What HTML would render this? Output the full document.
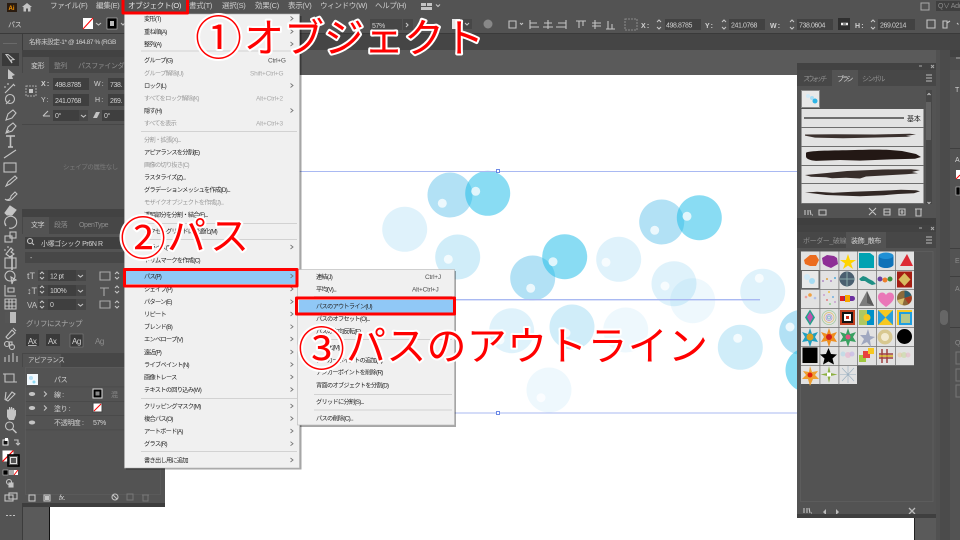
<!DOCTYPE html>
<html lang="ja"><head><meta charset="utf-8"><title>Illustrator</title>
<style>
html,body{margin:0;padding:0;width:960px;height:540px;overflow:hidden;background:#5a5a5a}
svg{display:block;position:absolute;left:0;top:0;filter:blur(.35px)}
text{font-family:"Liberation Sans","Noto Sans CJK JP",sans-serif}
.m{font-size:6.2px;fill:#262626;letter-spacing:-.7px}
.d{font-size:6.2px;fill:#9a9a9a;letter-spacing:-.7px}
.s{font-size:6.5px;fill:#555;letter-spacing:-.2px}
.sd{font-size:6.5px;fill:#aaa;letter-spacing:-.2px}
.b{font-size:7px;fill:#d2d2d2;letter-spacing:-.4px}
.g{font-size:7px;fill:#8d8d8d;letter-spacing:-.4px}
.o{font-family:"Noto Sans CJK JP",sans-serif;fill:#f00;stroke:#fff;stroke-width:4px;paint-order:stroke;stroke-linejoin:round}
.i{fill:none;stroke:#c4c4c4;stroke-width:1.1}
.f{fill:#c4c4c4}
</style></head><body>
<svg width="960" height="540" viewBox="0 0 960 540" xmlns="http://www.w3.org/2000/svg">
<!-- base -->
<rect width="960" height="540" fill="#5a5a5a"/>
<rect x="49" y="75" width="865" height="465" fill="#fff"/>
<rect x="49" y="75" width="1" height="465" fill="#111"/>
<rect x="914" y="75" width="1" height="465" fill="#222"/>
<rect y="33" width="960" height="17" fill="#454545"/>
<rect x="23" y="34" width="103" height="16" fill="#535353"/>
<text x="29" y="44" class="b" style="font-size:6.5px">名称未設定-1* @ 164.87 % (RGB</text>
<rect width="960" height="14" fill="#535353"/>
<rect y="14" width="960" height="19" fill="#535353"/>
<rect y="33" width="960" height="1" fill="#3a3a3a"/>

<!-- artwork -->
<g fill="#29abe2">
<g fill-opacity=".15"><circle cx="404.7" cy="229.3" r="22.5"/><circle cx="618.7" cy="259.3" r="22.5"/><circle cx="674" cy="283.7" r="22.5"/><circle cx="762.7" cy="291.3" r="22.5"/><circle cx="511.7" cy="330.7" r="22.5"/></g>
<g fill-opacity=".08"><circle cx="692.7" cy="300.7" r="22.5"/><circle cx="625.7" cy="330" r="22.5"/><circle cx="549" cy="390" r="22.5"/></g>
<g fill-opacity=".22"><circle cx="457.7" cy="257" r="22.5"/><circle cx="572" cy="327" r="22.5"/><circle cx="740.3" cy="347.3" r="22.5"/></g>
<g fill-opacity=".36"><circle cx="450" cy="195" r="22.5"/><circle cx="532.7" cy="278" r="22.5"/><circle cx="661.7" cy="222" r="22.5"/><circle cx="801.7" cy="332.3" r="22.5"/></g>
<g fill="#1cbbe8" fill-opacity=".52"><circle cx="487.7" cy="193.3" r="22.5"/><circle cx="564.7" cy="256.7" r="22.5"/><circle cx="699.3" cy="217.7" r="22.5"/><circle cx="808" cy="370" r="22.5"/></g>
</g>
<g fill="#fff" fill-opacity=".75">
<circle cx="442.3" cy="203.3" r="4.5"/><circle cx="475.7" cy="191.3" r="4.5"/><circle cx="448.3" cy="259.3" r="4.5"/><circle cx="530.7" cy="288.3" r="4.5"/><circle cx="553" cy="261.7" r="4.5"/><circle cx="606" cy="262.3" r="4.5"/><circle cx="654.7" cy="230.3" r="4.5"/><circle cx="687" cy="216.3" r="4.5"/><circle cx="665" cy="286" r="4.5"/><circle cx="759.3" cy="278.3" r="4.5"/><circle cx="737.7" cy="338.3" r="4.5"/><circle cx="541" cy="397.7" r="4.5"/><circle cx="566" cy="333" r="4.5"/><circle cx="500" cy="340" r="4.5"/><circle cx="790" cy="327" r="4.5"/>
</g>
<g fill="#a9b9f2">
<rect x="165" y="171" width="632" height="1"/><rect x="165" y="412.5" width="632" height="1"/><rect x="400" y="299" width="360" height="1.4"/>
</g>
<g fill="#fff" stroke="#4a6fe0" stroke-width=".8"><rect x="496.5" y="169.5" width="3" height="3"/><rect x="496.5" y="411.5" width="3" height="3"/></g>

<!-- left toolbar -->
<rect x="0" y="34" width="22" height="506" fill="#535353"/>
<rect x="22" y="34" width="1" height="506" fill="#3c3c3c"/>
<rect x="3" y="43" width="14" height="1" fill="#6a6a6a"/>
<rect x="2" y="53" width="17" height="13" fill="#3a3a3a"/>
<path class="i" d="M8 54.5l6 5-3 .5 1 3-6-8.500z"/>
<path class="f" d="M8 69l7 6-3 1 1 3h-5z"/>
<g class="i">
<path d="M5 93l9-9M13 84l2 2M8 83v2M4 87h2"/>
<circle cx="10" cy="99" r="4.500"/><path d="M6 104l4-4"/>
<path d="M6 120l2-6 5-4 3 3-4 5z"/>
<path d="M6 133l2-6 5-4 3 3-4 5zM6 133l3-3"/>
<path d="M6 136h9M10.500 136v11M8 147h5" stroke-width="1.600"/>
<path d="M4 158l12-8"/>
<rect x="4" y="163" width="12" height="9"/>
<path d="M6 186l2-4 7-6 2 2-7 6z"/>
<path d="M5 199c2 2 6 0 6-3l4-4 2 2-5 5c-2 2-5 2-7 0z"/>
<path d="M5 213l5-7 6 4-4 5H7z" fill="#c4c4c4"/>
<path d="M6 226a6 6 0 1 1 3 2M6 226l-1-3"/>
<rect x="5" y="236" width="7" height="6"/><rect x="10" y="232" width="6" height="6"/>
<path d="M6 254l5-6 2 2-2 2 3 2-4 3zM4 250h2M8 246v2"/>
<rect x="5" y="258" width="11" height="10"/><path d="M12 256v14" stroke-width="1.600"/>
<circle cx="10" cy="276" r="5"/><path d="M11 277l5 3-3 1-1 3z"/>
<path d="M5 285v11h11M8 292h6v-4H8z"/>
<path d="M5 299h11v10H5zM5 302h11M5 306h11M9 299v10M12 299v10"/>
</g>
<rect x="5" y="312" width="11" height="11" fill="#bbb"/><rect x="5" y="312" width="5" height="11" fill="#555"/>
<g class="i">
<path d="M6 337l6-7 3 3-7 6zM13 328l3 3"/>
<circle cx="7" cy="344" r="2.500"/><circle cx="12" cy="347" r="2.500"/><rect x="9" y="342" width="3" height="3"/>
<path d="M5 362v-5M9 362v-7M13 362v-9M17 362v-6"/>
<path d="M5 378v-8h9v8H5zM3 370h2M14 378h3" transform="translate(0,4)"/>
<path d="M6 391l-1 8M6 399l6-8 3 2-7 7z" transform="translate(0,1)"/>
</g>
<path class="f" d="M7 417v-7l1-1 1 1v-3h1l1 3v-3h1l1 3v-2h1l1 3v-1h1v5l-2 5H9z"/>
<g class="i"><circle cx="9.500" cy="426" r="4"/><path d="M12.500 429l4 4" stroke-width="1.500"/></g>
<rect x="3" y="440" width="5" height="5" fill="#111" stroke="#eee"/><rect x="5" y="438" width="3" height="3" fill="#fff"/>
<path class="i" d="M14 440h4v5M16 443l2 2 2-2"/>
<rect x="2.500" y="450.500" width="11" height="11" fill="#fff"/><path d="M2.500 461.500l11-11" stroke="#f00" stroke-width="1.200"/>
<rect x="8" y="455" width="11" height="11" fill="#555" stroke="#000" stroke-width="1.600"/>
<rect x="10.500" y="457.500" width="6" height="6" fill="#555" stroke="#ddd" stroke-width="1"/>
<rect x="3" y="470" width="5" height="5" fill="#000" stroke="#ddd" stroke-width=".5"/><rect x="9" y="470" width="5" height="5" fill="#aaa"/><rect x="14" y="470" width="4" height="5" fill="#fff"/><path d="M14 475l4-5" stroke="#f00"/>
<g class="i"><circle cx="9" cy="482" r="2.500"/><rect x="9" y="483" width="4" height="4" fill="#c4c4c4"/>
<rect x="5" y="495" width="8" height="6"/><rect x="9" y="493" width="8" height="6"/></g>
<g class="f"><rect x="6" y="515" width="2" height="1"/><rect x="9.500" y="515" width="2" height="1"/><rect x="13" y="515" width="2" height="1"/></g>

<!-- left panels -->
<rect x="22" y="50" width="143" height="457" fill="#535353"/>
<rect x="22" y="50" width="143" height="7" fill="#424242"/>
<rect x="22" y="57" width="143" height="16" fill="#474747"/>
<rect x="23" y="57" width="26" height="16" fill="#535353"/>
<text x="31" y="68" class="b">変形</text><text x="54" y="68" class="g">整列</text><text x="78" y="68" class="g">パスファインダー</text>
<g fill="#c4c4c4"><rect x="26" y="86" width="10" height="10" fill="none" stroke="#aaa" stroke-dasharray="2 1"/><rect x="29" y="89" width="4" height="4"/></g>
<text x="41" y="86" class="b" font-weight="bold">X :</text>
<rect x="53" y="78" width="36" height="12" fill="#3f3f3f"/><text x="55" y="87" class="b">498.8785</text>
<text x="94" y="86" class="b">W :</text><rect x="108" y="78" width="17" height="12" fill="#3f3f3f"/><text x="110" y="87" class="b">738.</text>
<text x="41" y="102" class="b">Y :</text>
<rect x="53" y="94" width="36" height="12" fill="#3f3f3f"/><text x="55" y="103" class="b">241.0768</text>
<text x="95" y="102" class="b">H :</text><rect x="108" y="94" width="17" height="12" fill="#3f3f3f"/><text x="110" y="103" class="b">269.</text>
<path class="i" d="M43 116l5-5M43 116h7"/>
<rect x="53" y="110" width="26" height="11" fill="#3f3f3f"/><text x="55" y="118" class="b">0°</text><rect x="79" y="110" width="9" height="11" fill="#474747"/><path class="i" d="M81 115l2.500 2 2.500-2"/>
<path class="f" d="M93 118l3-6h4l-3 6z"/><rect x="102" y="110" width="23" height="11" fill="#3f3f3f"/><text x="104" y="118" class="b">0°</text>
<rect x="22" y="124" width="103" height="1" fill="#474747"/>
<text x="63" y="169" class="g" style="font-size:6.500px;fill:#7a7a7a">シェイプの属性なし</text>

<rect x="22" y="209" width="143" height="8" fill="#424242"/>
<rect x="22" y="217" width="143" height="17" fill="#474747"/>
<rect x="23" y="217" width="26" height="17" fill="#535353"/>
<text x="31" y="227" class="b">文字</text><text x="54" y="227" class="g">段落</text><text x="79" y="227" class="g">OpenType</text>
<rect x="25" y="237" width="100" height="12" fill="#3f3f3f"/><text x="41" y="246" class="b">小塚ゴシック Pr6N R</text>
<g class="i"><circle cx="30" cy="241" r="2.500"/><path d="M32 243l2 2"/></g>
<rect x="25" y="252" width="100" height="11" fill="#474747"/><text x="30" y="260" class="b">-</text>
<g fill="#474747"><rect x="38" y="270" width="48" height="11"/><rect x="38" y="285" width="48" height="11"/><rect x="38" y="299" width="48" height="11"/></g>
<g fill="#3f3f3f"><rect x="48" y="270" width="28" height="11"/><rect x="48" y="285" width="28" height="11"/><rect x="48" y="299" width="28" height="11"/></g>
<text x="50" y="278.500" class="b">12 pt</text><text x="50" y="293" class="b">100%</text><text x="50" y="307" class="b">0</text>
<text x="27" y="279" fill="#c4c4c4" font-size="9">tT</text><text x="27" y="294" fill="#c4c4c4" font-size="9">↕T</text><text x="27" y="308" fill="#c4c4c4" font-size="8">VA</text>
<g class="i"><path d="M40 274l2-2 2 2M40 277l2 2 2-2M40 288l2-2 2 2M40 291l2 2 2-2M40 303l2-2 2 2M40 306l2 2 2-2M78 275l2.500 2 2.500-2M78 290l2.500 2 2.500-2M78 304l2.500 2 2.500-2"/>
<path d="M100 272h10v8h-10zM100 288h9M104 288v8M100 301h10v7h-10z" stroke="#aaa"/>
<path d="M115 274l2-2 2 2M115 277l2 2 2-2M115 288l2-2 2 2M115 291l2 2 2-2M115 303l2-2 2 2M115 306l2 2 2-2"/></g>
<text x="26" y="326" style="font-size:7.500px;fill:#a8a8a8;letter-spacing:-.5px">グリフにスナップ</text>
<g><rect x="26" y="334" width="13" height="12" fill="#3a3a3a"/><rect x="46" y="334" width="14" height="12" fill="#3a3a3a"/><rect x="70" y="334" width="13" height="13" fill="#3a3a3a" stroke="#888" stroke-width=".5"/>
<text x="28" y="344" class="b" style="font-size:8px;text-decoration:underline">Ax</text><text x="48" y="344" class="b" style="font-size:8px">Ax</text><text x="72" y="344" class="b" style="font-size:8px">Ag</text><text x="95" y="344" class="g" style="font-size:8px">Ag</text></g>

<rect x="22" y="353" width="143" height="14" fill="#474747"/>
<rect x="23" y="354" width="38" height="13" fill="#535353"/>
<text x="28" y="362" class="b" style="font-size:6.500px">アピアランス</text>
<rect x="27" y="374" width="11" height="11" fill="#f2f8fc"/><circle cx="31" cy="378" r="2" fill="#b5e0f5"/><circle cx="34" cy="382" r="1.500" fill="#8ad9f3"/>
<text x="54" y="382" class="b">パス</text>
<g fill="#484848"><rect x="25" y="386.500" width="100" height=".8"/><rect x="25" y="401" width="100" height=".8"/><rect x="25" y="415" width="100" height=".8"/><rect x="25" y="429.500" width="100" height=".8"/></g>
<g class="f"><ellipse cx="32" cy="394" rx="3.200" ry="2"/><ellipse cx="32" cy="408" rx="3.200" ry="2"/><ellipse cx="32" cy="422.500" rx="3.200" ry="2"/></g>
<path class="i" d="M44 391.500l2.500 2.500-2.500 2.500M44 405.500l2.500 2.500-2.500 2.500"/>
<text x="54" y="397" class="b">線 :</text><text x="54" y="411" class="b">塗り :</text><text x="54" y="425" class="b">不透明度 :</text><text x="93" y="425" class="b">57%</text>
<text x="111" y="397" class="g">混</text>
<rect x="93" y="389" width="9" height="9" fill="#000" stroke="#ddd"/><rect x="95.500" y="391.500" width="4" height="4" fill="#888"/>
<rect x="93" y="403" width="9" height="9" fill="#fff" stroke="#444"/><path d="M94 411l7-7" stroke="#f00"/>
<rect x="25.500" y="367.500" width="135" height="127" fill="none" stroke="#5e5e5e" stroke-width=".7"/>
<g class="i"><rect x="29" y="495" width="6" height="6"/><rect x="44" y="495" width="6" height="6"/><rect x="45.500" y="496.500" width="3" height="3" fill="#c4c4c4"/>
<circle cx="115" cy="497" r="3"/><path d="M113 495l4 4"/></g>
<text x="59" y="500" class="b" style="font-size:7px;font-style:italic">fx.</text>
<g fill="none" stroke="#777" stroke-width="1"><rect x="127" y="494" width="6" height="6"/><path d="M142 495h7M143 495v6h5v-6"/></g>
<rect x="22" y="503" width="143" height="4" fill="#3d3d3d"/>

<!-- control bar text -->
<text x="8" y="27" class="b">パス</text>
<rect x="83" y="18" width="10" height="11" fill="#fff"/><path d="M83 29l10-11" stroke="#f00" stroke-width="1"/>
<path class="i" d="M96 23l2.500 2 2.500-2"/>
<rect x="107" y="18" width="10" height="11" fill="#000" stroke="#ddd" stroke-width=".5"/><rect x="110" y="21" width="4" height="5" fill="#bbb"/>
<path class="i" d="M121 23l2 2 2-2"/>
<!-- menu bar -->
<rect x="7" y="3" width="10" height="9" fill="#2b1c10"/><text x="8.500" y="10" style="font-size:6px;fill:#ff9a00;font-weight:bold">Ai</text>
<path class="f" d="M22 7l5-4 5 4h-1.500v4.500H28V8.500h-2v3h-2.500V7z"/>
<g class="b" style="font-size:7.500px;fill:#cfcfcf;letter-spacing:-.3px">
<text x="50" y="8" style="font-size:7.500px">ファイル(F)</text><text x="96" y="8">編集(E)</text><text x="128" y="8" fill="#e6e6e6">オブジェクト(O)</text><text x="189" y="8">書式(T)</text><text x="222" y="8">選択(S)</text><text x="255" y="8">効果(C)</text><text x="288" y="8">表示(V)</text><text x="320" y="8">ウィンドウ(W)</text><text x="375" y="8">ヘルプ(H)</text></g>
<rect x="421" y="3" width="5" height="3" fill="#c4c4c4"/><rect x="427" y="3" width="5" height="3" fill="#c4c4c4"/><rect x="421" y="7" width="11" height="3" fill="#c4c4c4"/><path class="i" d="M436 4.500l2 2 2-2"/>
<rect x="921" y="3" width="8" height="7" fill="none" stroke="#aaa"/><rect x="936" y="1" width="24" height="10" fill="#3f3f3f"/><text x="938" y="8" class="g">Q∨ Ado</text>
<!-- control right -->
<rect x="370" y="19" width="32" height="11" fill="#474747"/><text x="372" y="28" class="b">57%</text>
<rect x="403" y="19" width="10" height="11" fill="#474747"/><path class="i" d="M406 23l2 2-2 2"/>
<circle cx="488" cy="24" r="4.500" fill="#888"/>
<rect x="452" y="19" width="20" height="10" fill="#474747"/><rect x="452" y="19" width="8" height="10" fill="#e8e8e8"/><path class="i" d="M465 23l2 2 2-2"/>
<g class="i" stroke="#bbb"><path d="M509 21v7h7v-7zM520 23l1.500 1.500 1.500-1.500"/>
<path d="M530 20v9M530 23h7M530 27h9M548 20v9M544 23h8M543 27h10M566 20v9M558 23h8M556 27h10M576 21h10M579 21v7M583 21v5M595 20v9M592 23h9M592 26h9M606 29h9M608 21v8M612 24v5"/>
<rect x="625" y="19" width="12" height="11" stroke="#888" stroke-dasharray="2 1"/></g>
<g class="b" style="font-weight:bold"><text x="641" y="28">X :</text><text x="705" y="28">Y :</text><text x="770" y="28">W :</text><text x="855" y="28">H :</text></g>
<g fill="#424242"><rect x="665" y="19" width="36" height="11"/><rect x="729" y="19" width="36" height="11"/><rect x="797" y="19" width="36" height="11"/><rect x="878" y="19" width="37" height="11"/></g>
<g class="b"><text x="666" y="27.500">498.8785</text><text x="731" y="27.500">241.0768</text><text x="799" y="27.500">738.0604</text><text x="880" y="27.500">269.0214</text></g>
<g class="i"><path d="M657 22l2-2 2 2M657 27l2 2 2-2M722 22l2-2 2 2M722 27l2 2 2-2M790 22l2-2 2 2M790 27l2 2 2-2M871 22l2-2 2 2M871 27l2 2 2-2"/>
<path d="M927 20h8v8h-8zM943 21h4v7h-4zM947 23l3-2M957 23l1.500 1.500"/></g>
<rect x="838" y="18" width="12" height="12" fill="#2f2f2f"/><path d="M841 24h7" stroke="#eee" stroke-width="2.500"/><path d="M843 24h3" stroke="#2f2f2f"/>

<!-- right dock -->
<rect x="936" y="50" width="14" height="490" fill="#515151"/>
<rect x="940" y="50" width="10" height="490" fill="#4b4b4b"/>
<rect x="950" y="50" width="10" height="490" fill="#4d4d4d"/>
<rect x="950" y="70" width="10" height="470" fill="#535353"/>
<rect x="940" y="310" width="8" height="15" rx="4" fill="#666"/>
<g fill="#3f3f3f"><rect x="950" y="148" width="10" height="1"/><rect x="950" y="248" width="10" height="1"/><rect x="950" y="276" width="10" height="1"/><rect x="950" y="327" width="10" height="1"/></g>
<text x="955" y="92" class="b">T</text><text x="955" y="162" class="b">A</text>
<rect x="956" y="170" width="4" height="9" fill="#fff"/><path d="M956 179l4-4" stroke="#f00"/>
<rect x="956" y="187" width="4" height="8" fill="#000" stroke="#ddd" stroke-width=".5"/>
<text x="955" y="263" class="g">E</text><text x="955" y="291" class="g">A</text><text x="955" y="345" class="g">Q</text>
<g fill="none" stroke="#777"><rect x="956" y="352" width="5" height="12"/><rect x="956" y="369" width="5" height="12"/><rect x="956" y="385" width="5" height="12"/></g>
<rect x="950" y="50" width="10" height="7" fill="#424242"/>
<path d="M956 58h4" stroke="#aaa"/>

<!-- brush panel -->
<rect x="797" y="63" width="139" height="159" fill="#535353"/>
<rect x="797" y="63" width="139" height="7" fill="#424242"/>
<path d="M919 66h3M931 65l3 3M934 65l-3 3" stroke="#aaa"/>
<rect x="797" y="70" width="139" height="16" fill="#474747"/>
<rect x="832" y="70" width="26" height="16" fill="#535353"/>
<text x="803" y="81" class="g" textLength="24">スウォッチ</text><text x="837" y="81" class="b" textLength="16">ブラシ</text><text x="862" y="81" class="g" textLength="23">シンボル</text>
<path d="M926 75h6M926 78h6M926 81h6" stroke="#bbb"/>
<rect x="801.500" y="90.500" width="18" height="17" fill="#e8e8e8" stroke="#888"/>
<circle cx="808" cy="96" r="2" fill="#cfe9f7"/><circle cx="812" cy="98" r="2" fill="#a8dcf3"/><circle cx="815" cy="101" r="2.500" fill="#2fb5e6"/>
<rect x="801.500" y="109" width="122" height="95" fill="#e3e3e3"/>
<g fill="#6e6e6e"><rect x="801" y="127" width="123" height="1"/><rect x="801" y="146" width="123" height="1"/><rect x="801" y="165" width="123" height="1"/><rect x="801" y="183" width="123" height="1"/><rect x="801" y="203" width="123" height="1"/></g>
<rect x="804" y="117" width="100" height="2" fill="#6e6e6e"/><text x="907" y="121" style="font-size:7px;fill:#222;letter-spacing:-.3px">基本</text>
<g fill="#231815">
<path d="M805 134.500l30-.3 40 .3 35-.8 6 .8-10 1.400 5 .8-28 .7-40 .8-28-.6-10-2z" fill-opacity=".88"/>
<path d="M806 153c0-2 20-2.500 40-2.700 20-.5 30-1 44-.3l12 1 14 3 5 3-6 1.800-25 .6-30 1.200-20-.6-24 .9c-6-.4-10-2-10-4.500z"/>
<path d="M805 175l22-2 20-2 36-1.500 28-.3 9 .8-8 2 6 1.200-12 1-18 1-22 1.300-6 2-14-.8-14 .5-6-1-15-.5z" fill-opacity=".9"/>
<path d="M805 192.500l12-.7 16 1 20-1 28-1 20-1 15 .5 4 1-6 2-16 .7-14 1.200-24 1-14-.5-20-.7-12-1.500z" fill-opacity=".92"/>
</g>
<rect x="926" y="90" width="6" height="114" fill="#474747"/><rect x="926" y="102" width="5" height="38" fill="#626262"/>
<g class="i"><path d="M927.500 95l1.500-1.500 1.500 1.500M927.500 202l1.500 1.500 1.500-1.500"/>
<path d="M805 215v-5M808 215v-5M811 215l-1-5M812 215h1M819 210h7v5h-7z"/>
<path d="M869 208l7 7M876 208l-7 7M884 209h6v6h-6zM884 212h6M899 209h6v6h-6zM902 210v4M900.500 212h3M916 209h5v7h-5zM915 209h7"/></g>
<rect x="797" y="218" width="139" height="7" fill="#3f3f3f"/>

<!-- symbols panel -->
<rect x="797" y="225" width="139" height="290" fill="#535353"/>
<rect x="797" y="225" width="139" height="7" fill="#424242"/>
<path d="M919 228h3M931 227l3 3M934 227l-3 3" stroke="#aaa"/>
<rect x="797" y="232" width="139" height="16" fill="#474747"/>
<rect x="846" y="232" width="40" height="16" fill="#535353"/>
<text x="803" y="243" class="g">ボーダー_破線</text><text x="851" y="243" class="b">装飾_散布</text>
<path d="M926 237h6M926 240h6M926 243h6" stroke="#bbb"/>
<rect x="800.500" y="251.500" width="132.500" height="250" fill="none" stroke="#616161" stroke-width=".7"/>
<rect x="801" y="251.500" width="113" height="114" fill="#e2e2e2"/>
<rect x="801" y="365" width="56" height="19" fill="#e2e2e2"/>
<g fill="#7a7a7a"><rect x="819.500" y="251.500" width=".8" height="133"/><rect x="838.500" y="251.500" width=".8" height="133"/><rect x="857" y="251.500" width=".8" height="114"/><rect x="876" y="251.500" width=".8" height="114"/><rect x="895" y="251.500" width=".8" height="114"/><rect x="801" y="270" width="113" height=".8"/><rect x="801" y="289" width="113" height=".8"/><rect x="801" y="308" width="113" height=".8"/><rect x="801" y="327" width="113" height=".8"/><rect x="801" y="346" width="113" height=".8"/><rect x="801" y="365" width="113" height=".8"/></g>
<!-- row1 -->
<path d="M804 260l6-5h6l3 5-3 6h-6l-5-2z" fill="#ec6c1f"/>
<path d="M822 258l5-3 7 1 3 2 1 6-7 4-5-2-3-2z" fill="#8e2f96"/>
<path d="M848 254l2 6h6l-5 3.500 2 5.500-5-3.500-5 3.500 2-5.500-5-3.500h6z" fill="#ffd400"/>
<path d="M859 253h11l4 3v12h-15z" fill="#00a2b2"/>
<ellipse cx="886" cy="256" rx="7.500" ry="3.500" fill="#1f8fd4"/><path d="M878.500 256v9c2 4 13 4 15 0v-9c-2 4-13 4-15 0z" fill="#0f72b8"/>
<path d="M907 254l6 12h-13z" fill="#dd2a35"/>
<!-- row2 -->
<rect x="801.500" y="270.500" width="17.500" height="18" fill="#e9e9e9" stroke="#666"/>
<circle cx="807" cy="277" r="3" fill="#cfe9f7"/><circle cx="812" cy="281" r="3" fill="#a8dcf3"/>
<g fill="#b08bc5"><circle cx="823" cy="281" r="1"/><circle cx="827" cy="279" r="1" fill="#e0a040"/><circle cx="831" cy="281" r="1"/><circle cx="835" cy="278" r="1" fill="#4fa8d8"/></g>
<circle cx="847" cy="279" r="7.500" fill="#4a5f70"/><path d="M847 272v15M840 279h15" stroke="#8aa" stroke-width="1"/>
<path d="M859 279l4-3 3 1 3 2 4 2 3 3-4 1-4-2-3-2h-4z" fill="#1f8f85"/>
<circle cx="880" cy="279" r="2.500" fill="#6b3fa0"/><circle cx="885" cy="280" r="2.500" fill="#ee7f2a"/><circle cx="890" cy="279" r="2.500" fill="#3a8f3a"/>
<rect x="897" y="271.500" width="15" height="16" fill="#a51e12"/><path d="M904.500 273l6 6.500-6 6.500-6-6.500z" fill="#d8bc60"/>
<!-- row3 -->
<g><circle cx="806" cy="297" r="1.300" fill="#e8a0a0"/><circle cx="810" cy="295" r="1.800" fill="#f0a040"/><circle cx="815" cy="298" r="1.300" fill="#b0c0e8"/></g>
<g fill="#c8a0d0"><circle cx="824" cy="295" r="1"/><circle cx="829" cy="292" r="1" fill="#f0c040"/><circle cx="833" cy="297" r="1" fill="#70b0e0"/><circle cx="827" cy="300" r="1" fill="#e08080"/><circle cx="835" cy="302" r="1"/><circle cx="830" cy="304" r="1" fill="#90d090"/></g>
<rect x="840" y="296" width="15" height="5" rx="2.500" fill="#6b2fa0"/><rect x="840" y="296" width="4" height="5" fill="#e02020"/><rect x="845" y="295" width="5" height="7" fill="#f7a800"/>
<path d="M867 291l7 15h-15z" fill="#7d7d7d"/><path d="M867 291l7 15-7-3z" fill="#5a5a5a"/>
<path d="M886 307c-4-3-8-6-8-10 0-5 6-6 8-2 2-4 8-3 8 2 0 4-4 7-8 10z" fill="#ea77b8"/>
<circle cx="904.500" cy="298" r="7.500" fill="#8b6a3a"/><path d="M904.500 298v-7.500a7.500 7.500 0 0 1 7 5z" fill="#2f5f6f"/><path d="M904.500 298l7-2a7.500 7.500 0 0 1-3 8z" fill="#a83a20"/><path d="M904.500 298l-7 2a7.500 7.500 0 0 0 5 5z" fill="#d8c070"/>
<!-- row4 -->
<path d="M810 309.500l5 8-5 8-5-8z" fill="#22a08a"/><path d="M810 312l3 5-3 6-3-6z" fill="#c050b0"/>
<g fill="none" stroke-width=".7"><circle cx="829" cy="317.500" r="7" stroke="#9dc99a"/><circle cx="829" cy="317.500" r="5" stroke="#e0c070"/><circle cx="829" cy="317.500" r="3" stroke="#b090d0"/><circle cx="829" cy="317.500" r="1.500" stroke="#70b0d0"/></g>
<rect x="840" y="310" width="15" height="15" fill="#c04020"/><rect x="842" y="312" width="11" height="11" fill="#111"/><rect x="844" y="314" width="7" height="7" fill="#fff"/><rect x="846" y="316" width="3" height="3" fill="#d03020"/>
<rect x="859" y="310" width="15" height="15" fill="#b0c860"/><rect x="867" y="310" width="7" height="15" fill="#0090c8"/><circle cx="867" cy="317.500" r="3.500" fill="#f7c820"/>
<rect x="878" y="310" width="15" height="15" fill="#f7c820"/><path d="M878 310l7.500 7.500L878 325zM893 310l-7.500 7.500L893 325z" fill="#2a9fd8"/>
<rect x="897" y="310" width="15" height="15" fill="#f7c820"/><rect x="899" y="312" width="13" height="13" fill="#1f9fe0"/><rect x="901" y="314" width="9" height="9" fill="#b5c98a"/>
<!-- row5 -->
<path d="M810 328l2 6 6-2-3 5 3 5-6-1-2 6-2-6-6 1 3-5-3-5 6 2z" fill="#1f9fc0"/><circle cx="810" cy="337" r="3.500" fill="#d8a020"/>
<path d="M829 328l2 6 6-2-3 5 3 5-6-1-2 6-2-6-6 1 3-5-3-5 6 2z" fill="#ef8f20"/><circle cx="829" cy="337" r="3" fill="#d02020"/>
<path d="M848 328l2 6 6-2-3 5 3 5-6-1-2 6-2-6-6 1 3-5-3-5 6 2z" fill="#38a060"/><circle cx="848" cy="337" r="2.500" fill="#e05080"/>
<path d="M868 329l2 7 5 1-5 3 1 7-4-5-6 3 3-6-4-4 6 0z" fill="#a0a8c0"/>
<circle cx="885" cy="337" r="7.500" fill="#d8c890"/><circle cx="885" cy="337" r="4" fill="#f2ead0"/>
<circle cx="904.500" cy="336.500" r="7.500" fill="#000"/>
<!-- row6 -->
<rect x="802.500" y="347.500" width="15" height="15.500" fill="#000"/>
<path d="M828.500 348l2.500 6 6 .5-4.500 4 1.500 6-5.500-3-5.500 3 1.500-6-4.500-4 6-.5z" fill="#000"/>
<g fill-opacity=".7"><circle cx="843" cy="354" r="2.500" fill="#b8d8e8"/><circle cx="848" cy="355" r="3" fill="#e8b8d0"/><circle cx="852" cy="354" r="2.500" fill="#c8b8e8"/></g>
<rect x="859" y="355" width="7" height="7" fill="#a0c840"/><rect x="863" y="351" width="7" height="7" fill="#e84040"/><rect x="868" y="348" width="6" height="6" fill="#f7c820"/>
<path d="M879 354h14M879 358h14M882 349v14M887 349v14" stroke="#a04040" stroke-width="1.500"/><path d="M879 356h14" stroke="#d8b020" stroke-width="1.500"/>
<g fill-opacity=".6"><circle cx="900" cy="355" r="2.500" fill="#e8c8a0"/><circle cx="904" cy="355" r="3" fill="#c8d8a0"/><circle cx="908" cy="355" r="2.500" fill="#e8b8c8"/></g>
<!-- row7 -->
<path d="M810 366l2 6 6-1-3 4 4 4-6 0-3 7-2-7-6 0 4-4-3-4 6 1z" fill="#efa030"/><circle cx="810" cy="375" r="2.500" fill="#e02010"/>
<path d="M829 366l1.500 7 7 1.500-7 1.500-1.500 7-1.500-7-7-1.500 7-1.500z" fill="#8cb040"/><rect x="827" y="372.500" width="4" height="4" fill="#fff"/>
<path d="M848 366v17M840 374.500h16M842 368l12 13M854 368l-12 13" stroke="#9ab0c0" stroke-width=".6"/>
<g class="i" stroke="#bbb"><path d="M804 513v-5M807 513v-5M810 513l-1-5M811 513h1"/></g>
<path d="M826 509l-3 3 3 3zM836 509l3 3-3 3z" fill="#bbb"/>
<path d="M909 508l6 6M915 508l-6 6" stroke="#bbb" stroke-width="1.300"/>
<rect x="797" y="514" width="139" height="4" fill="#3f3f3f"/>

<!-- main menu -->
<rect x="126" y="16" width="175.500" height="453.500" fill="#000" fill-opacity=".35"/>
<rect x="124.500" y="14" width="175" height="454" fill="#f0f0f0" stroke="#b5b5b5" stroke-width=".6"/>
<g fill="#d2d2d2"><rect x="141" y="50.500" width="156" height="1"/><rect x="141" y="131" width="156" height="1"/><rect x="141" y="223" width="156" height="1"/><rect x="141" y="239" width="156" height="1"/><rect x="141" y="268" width="156" height="1"/><rect x="141" y="398" width="156" height="1"/><rect x="141" y="451" width="156" height="1"/></g>
<rect x="126" y="270" width="170" height="14" fill="#90c8f6"/>
<g class="m">
<text x="144" y="21">変形(T)</text><text x="144" y="34">重ね順(A)</text><text x="144" y="46.500">整列(A)</text>
<text x="144" y="62.500">グループ(G)</text><text x="144" y="88">ロック(L)</text><text x="144" y="113">隠す(H)</text>
<text x="144" y="154.500">アピアランスを分割(E)</text><text x="144" y="179.500">ラスタライズ(Z)...</text><text x="144" y="191.800">グラデーションメッシュを作成(D)...</text>
<text x="144" y="217">透明部分を分割・結合(F)...</text><text x="144" y="233.500">ピクセルグリッドに最適化(M)</text><text x="144" y="249.500">スライス(S)</text><text x="144" y="262.500">トリムマークを作成(C)</text>
<text x="144" y="278.500">パス(P)</text><text x="144" y="291.500">シェイプ(P)</text><text x="144" y="304.200">パターン(E)</text><text x="144" y="316.500">リピート</text><text x="144" y="329.200">ブレンド(B)</text><text x="144" y="341.500">エンベロープ(V)</text><text x="144" y="354.500">遠近(P)</text><text x="144" y="367">ライブペイント(N)</text><text x="144" y="379.500">画像トレース</text><text x="144" y="392">テキストの回り込み(W)</text>
<text x="144" y="408.500">クリッピングマスク(M)</text><text x="144" y="421">複合パス(O)</text><text x="144" y="433.500">アートボード(A)</text><text x="144" y="446.200">グラス(R)</text><text x="144" y="462.500">書き出し用に追加</text>
</g>
<g class="d">
<text x="144" y="75.500">グループ解除(U)</text><text x="144" y="100.500">すべてをロック解除(K)</text><text x="144" y="125.500">すべてを表示</text><text x="144" y="142">分割・拡張(X)...</text><text x="144" y="167">画像の切り抜き(C)</text><text x="144" y="204.500">モザイクオブジェクトを作成(J)...</text>
</g>
<text x="268" y="62.500" class="s">Ctrl+G</text><text x="250" y="75.500" class="sd">Shift+Ctrl+G</text><text x="256" y="100.500" class="sd">Alt+Ctrl+2</text><text x="256" y="125.500" class="sd">Alt+Ctrl+3</text>
<g fill="none" stroke="#777" stroke-width=".9"><path d="M290.500 16.500l2.500 2-2.500 2M290.500 29.500l2.500 2-2.500 2M290.500 42l2.500 2-2.500 2M290.500 83.500l2.500 2-2.500 2M290.500 108.500l2.500 2-2.500 2M290.500 245l2.500 2-2.500 2M290.500 274l2.500 2-2.500 2M290.500 287l2.500 2-2.500 2M290.500 299.700l2.500 2-2.500 2M290.500 312l2.500 2-2.500 2M290.500 324.700l2.500 2-2.500 2M290.500 337l2.500 2-2.500 2M290.500 350l2.500 2-2.500 2M290.500 362.500l2.500 2-2.500 2M290.500 375l2.500 2-2.500 2M290.500 387.500l2.500 2-2.500 2M290.500 404l2.500 2-2.500 2M290.500 416.500l2.500 2-2.500 2M290.500 429l2.500 2-2.500 2M290.500 441.700l2.500 2-2.500 2M290.500 458l2.500 2-2.500 2"/></g>

<!-- sub menu -->
<rect x="300" y="271" width="156" height="156" fill="#000" fill-opacity=".35"/>
<rect x="297.500" y="269.500" width="157" height="155.500" fill="#f0f0f0" stroke="#b5b5b5" stroke-width=".6"/>
<rect x="299" y="300" width="154" height="13" fill="#90c8f6"/>
<g fill="#d2d2d2"><rect x="314" y="296" width="138" height="1"/><rect x="314" y="339" width="138" height="1"/><rect x="314" y="394" width="138" height="1"/><rect x="314" y="409.500" width="138" height="1"/></g>
<g class="m">
<text x="316" y="279">連結(J)</text><text x="316" y="291.500">平均(V)...</text><text x="316" y="308.500">パスのアウトライン(U)</text><text x="316" y="321">パスのオフセット(O)...</text><text x="316" y="333.500">パスの方向反転(E)</text><text x="316" y="349.500">単純化(M)...</text><text x="316" y="362.500">アンカーポイントの追加(A)</text><text x="316" y="374.500">アンカーポイントを削除(R)</text><text x="316" y="387.500">背面のオブジェクトを分割(D)</text><text x="316" y="404">グリッドに分割(S)...</text><text x="316" y="420.500">パスの削除(C)...</text>
</g>
<text x="425" y="279" class="s">Ctrl+J</text><text x="412" y="291.500" class="s">Alt+Ctrl+J</text>

<!-- red boxes -->
<g fill="none" stroke="#f00" stroke-width="3" stroke-linejoin="round">
<rect x="123" y="-2" width="64.500" height="15"/>
<rect x="124.500" y="269.500" width="172.500" height="16.500"/>
<rect x="296.500" y="298" width="158" height="16"/>
</g>

<!-- annotations -->
<text x="195" y="55" class="o" font-size="47">①</text>
<text x="244" y="52" class="o" font-size="40" textLength="240">オブジェクト</text>
<text x="120" y="255" class="o" font-size="46">②</text>
<text x="167" y="250" class="o" font-size="39" textLength="82">パス</text>
<text x="298" y="366" class="o" font-size="47">③</text>
<text x="346" y="360" class="o" font-size="40" textLength="362">パスのアウトライン</text>
</svg>
</body></html>
